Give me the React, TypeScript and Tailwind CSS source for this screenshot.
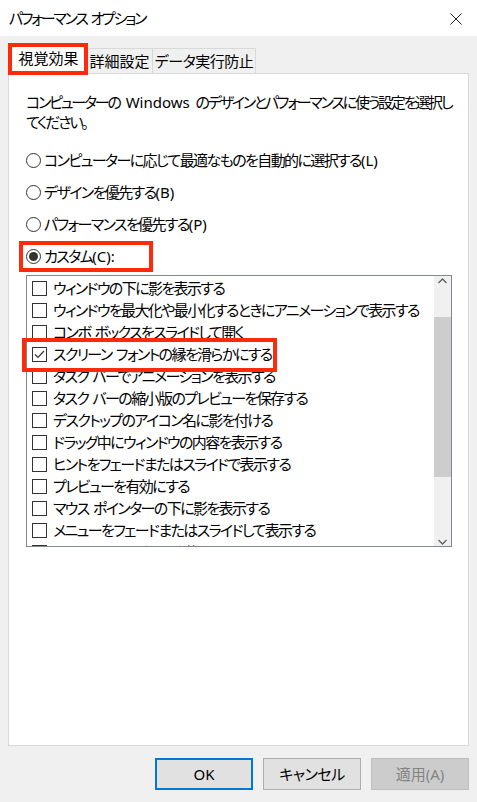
import React from "react";

const effects = [
  { label: "ウィンドウの下に影を表示する", checked: false },
  { label: "ウィンドウを最大化や最小化するときにアニメーションで表示する", checked: false },
  { label: "コンボ ボックスをスライドして開く", checked: false },
  { label: "スクリーン フォントの縁を滑らかにする", checked: true },
  { label: "タスク バーでアニメーションを表示する", checked: false },
  { label: "タスク バーの縮小版のプレビューを保存する", checked: false },
  { label: "デスクトップのアイコン名に影を付ける", checked: false },
  { label: "ドラッグ中にウィンドウの内容を表示する", checked: false },
  { label: "ヒントをフェードまたはスライドで表示する", checked: false },
  { label: "プレビューを有効にする", checked: false },
  { label: "マウス ポインターの下に影を表示する", checked: false },
  { label: "メニューをフェードまたはスライドして表示する", checked: false },
  { label: "メニュー項目をクリック後にフェードアウトする", checked: false },
];

const radios = [
  { label: "コンピューターに応じて最適なものを自動的に選択する", key: "L", selected: false },
  { label: "デザインを優先する", key: "B", selected: false },
  { label: "パフォーマンスを優先する", key: "P", selected: false },
  { label: "カスタム", key: "C", selected: true },
];

function Radio({ selected }: { selected: boolean }) {
  return (
    <span className="flex h-[15px] w-[15px] shrink-0 items-center justify-center rounded-full border border-[#333]">
      {selected && <span className="h-[9px] w-[9px] rounded-full bg-[#333]" />}
    </span>
  );
}

function Checkbox({ checked }: { checked: boolean }) {
  return (
    <span className="flex h-[15px] w-[15px] shrink-0 items-center justify-center border border-[#333] bg-white">
      {checked && (
        <svg width="11" height="9" viewBox="0 0 11 9" fill="none">
          <polyline points="1,4.5 4,7.5 10,1" stroke="#333" strokeWidth="1.2" />
        </svg>
      )}
    </span>
  );
}

function Highlight({ className }: { className: string }) {
  return <span className={`pointer-events-none absolute border-[4px] border-[#ff2a0a] ${className}`} />;
}

export default function App() {
  return (
    <div className="flex h-[802px] w-[477px] flex-col overflow-hidden bg-[#f0f0f0] font-['Noto_Sans','Noto_Sans_CJK_JP',sans-serif] text-[15px] tracking-[-1.6px] text-black [font-feature-settings:'palt'] [word-spacing:2px]">
      {/* Title bar */}
      <div className="flex h-[36px] shrink-0 items-center justify-between bg-white pl-[9px] pr-[15px]">
        <span className="leading-none tracking-[-2.2px]">パフォーマンス オプション</span>
        <svg width="12" height="12" viewBox="0 0 12 12" className="mt-[1px]">
          <path d="M0.5 0.5 L11.5 11.5 M11.5 0.5 L0.5 11.5" stroke="#222" strokeWidth="1" />
        </svg>
      </div>

      <div className="flex flex-1 flex-col px-[8px] pt-[8px]">
        {/* Tabs */}
        <div className="flex h-[29px] items-end pl-[2px]">
          <div className="relative z-10 -mb-px flex h-[30px] w-[77px] items-center justify-center border border-b-0 border-[#d9d9d9] bg-white pb-[2px] tracking-normal">
            視覚効果
            <Highlight className="-left-[3px] -right-[2px] -top-[2px] -bottom-[1px]" />
          </div>
          <div className="flex h-[25px] w-[66px] items-center justify-center border border-b-0 border-l-0 border-[#d9d9d9] tracking-normal">
            詳細設定
          </div>
          <div className="flex h-[25px] w-[103px] items-center justify-center border border-b-0 border-l-0 border-[#d9d9d9] tracking-[-0.5px]">
            データ実行防止
          </div>
        </div>

        {/* Panel */}
        <div className="flex h-[673px] flex-col border border-[#d9d9d9] bg-white pl-[17px] pr-[15px] pt-[18px]">
          <p className="leading-[20px] tracking-[-2.2px]">
            <span className="whitespace-nowrap">
              コンピューターの<span className="tracking-normal"> Windows </span>のデザインとパフォーマンスに使う設定を選択し
            </span>
            <br />
            てください。
          </p>

          <div className="mt-[12px] flex flex-col">
            {radios.map((r) => (
              <div key={r.key} className="relative flex h-[32px] items-center gap-[3px]">
                <Radio selected={r.selected} />
                <span>
                  {r.label}
                  <span className="tracking-normal">
                    ({r.key}){r.selected ? ":" : ""}
                  </span>
                </span>
                {r.selected && <Highlight className="-left-[7px] top-[1px] h-[31px] w-[134px]" />}
              </div>
            ))}
          </div>

          {/* Effects list */}
          <div className="relative mt-[3px] h-[272px] w-[426px]">
            <div className="flex h-full overflow-hidden border border-[#828790] bg-white">
              <ul className="flex-1 overflow-hidden pl-[5px] pt-[1px]">
                {effects.map((e) => (
                  <li key={e.label} className="flex h-[22px] items-center gap-[6px] whitespace-nowrap">
                    <Checkbox checked={e.checked} />
                    <span className="leading-none">{e.label}</span>
                  </li>
                ))}
              </ul>
              <div className="flex w-[17px] shrink-0 flex-col bg-[#f0f0f0]">
                <div className="flex h-[17px] items-center justify-center">
                  <svg width="9" height="6" viewBox="0 0 9 6">
                    <polyline points="0.5,5 4.5,1 8.5,5" fill="none" stroke="#606060" strokeWidth="1.3" />
                  </svg>
                </div>
                <div className="flex flex-1 flex-col pt-[32px] pb-[60px]">
                  <div className="h-[160px] bg-[#cdcdcd]" />
                </div>
                <div className="flex h-[17px] items-center justify-center">
                  <svg width="9" height="6" viewBox="0 0 9 6">
                    <polyline points="0.5,1 4.5,5 8.5,1" fill="none" stroke="#606060" strokeWidth="1.3" />
                  </svg>
                </div>
              </div>
            </div>
            <Highlight className="-left-[4px] top-[63px] h-[34px] w-[255px]" />
          </div>
        </div>

        {/* Dialog buttons */}
        <div className="mt-[12px] flex justify-end gap-[10px] tracking-normal">
          <button className="flex h-[32px] w-[98px] items-center justify-center border-2 border-[#0078d7] bg-[#e1e1e1]">
            OK
          </button>
          <button className="flex h-[32px] w-[98px] items-center justify-center border border-[#adadad] bg-[#e1e1e1] tracking-[-0.5px]">
            キャンセル
          </button>
          <button className="flex h-[32px] w-[98px] items-center justify-center border border-[#bfbfbf] bg-[#cccccc] text-[#838383]">
            適用(A)
          </button>
        </div>
      </div>
    </div>
  );
}
